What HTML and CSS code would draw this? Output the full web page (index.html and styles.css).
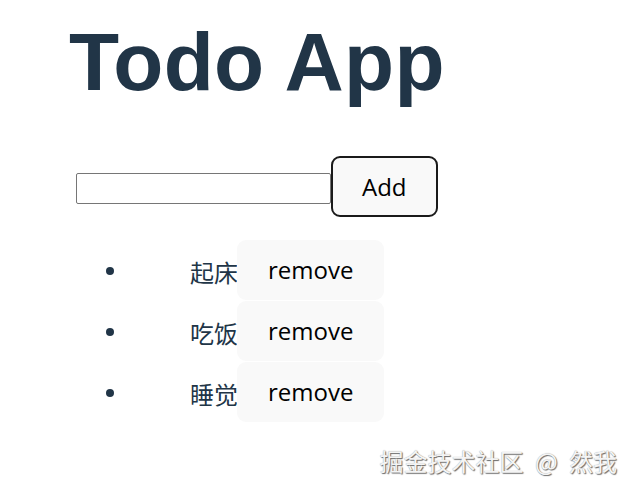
FILE: index.html
```html
<!DOCTYPE html>
<html lang="zh">
<head>
<meta charset="utf-8">
<title>Todo App</title>
<link rel="stylesheet" href="styles.css">
</head>
<body>
<div class="app">
  <h1 class="title">Todo App</h1>
  <div class="add-row">
    <input class="todo-input" type="text">
    <button class="add-btn">Add</button>
  </div>
  <ul class="todo-list">
    <li class="todo-item"><span class="todo-text">起床</span><button class="remove-btn">remove</button></li>
    <li class="todo-item"><span class="todo-text">吃饭</span><button class="remove-btn">remove</button></li>
    <li class="todo-item"><span class="todo-text">睡觉</span><button class="remove-btn">remove</button></li>
  </ul>
</div>
<div class="watermark">掘金技术社区 @ 然我</div>
</body>
</html>
```

FILE: styles.css
```css
html, body {
  margin: 0;
  padding: 0;
  background: #ffffff;
}

body {
  width: 634px;
  height: 490px;
  position: relative;
  overflow: hidden;
  font-family: "Open Sans", "Noto Sans CJK SC", sans-serif;
  color: #213547;
}

.app {
  padding-left: 68px;
}

.title {
  margin: 16px 0 0 0;
  padding-left: 1px;
  font-family: "Liberation Sans", Arial, sans-serif;
  font-weight: 700;
  font-size: 82px;
  line-height: 92px;
  letter-spacing: 0.3px;
  color: #213547;
}

.add-row {
  display: flex;
  align-items: flex-start;
  margin-top: 48px;
  padding-left: 8px;
}

.todo-input {
  box-sizing: border-box;
  width: 255px;
  height: 31px;
  margin: 17px 0 0 0;
  border: 1px solid #767676;
  border-radius: 2px;
  padding: 0 4px;
  font-size: 16px;
}

.add-btn {
  font-family: "Open Sans", sans-serif;
  font-size: 24px;
  line-height: 29px;
  padding: 14px 29px;
  border: 2px solid #1a1a1a;
  border-radius: 9px;
  background: #f9f9f9;
  color: #000;
}

.todo-list {
  list-style: none;
  margin: 23px 0 0 0;
  padding: 0 0 0 38px;
  display: flex;
  flex-direction: column;
  gap: 1px;
}

.todo-item {
  display: flex;
  align-items: center;
  height: 60px;
}

.todo-item::before {
  content: "";
  width: 8px;
  height: 8px;
  border-radius: 50%;
  background: #213547;
  margin-right: 76px;
  margin-top: 2px;
}

.todo-text {
  font-family: "Noto Sans CJK SC", sans-serif;
  font-size: 24px;
  line-height: 30px;
  margin-top: 4px;
  color: #213547;
}

.remove-btn {
  height: 60px;
  margin-left: -1px;
  padding: 0 31px;
  border: none;
  border-radius: 9px;
  background: #f9f9f9;
  font-family: "Open Sans", sans-serif;
  font-size: 24px;
  line-height: 30px;
  color: #000;
}

.watermark {
  position: absolute;
  right: 17px;
  bottom: 14px;
  font-family: "Noto Sans CJK SC", sans-serif;
  font-size: 24px;
  line-height: 30px;
  color: #f4f4f4;
  text-shadow: 1px 1px 1px #6a6a6a, 0 0 1px #9a9a9a;
  word-spacing: 6px;
}
```
